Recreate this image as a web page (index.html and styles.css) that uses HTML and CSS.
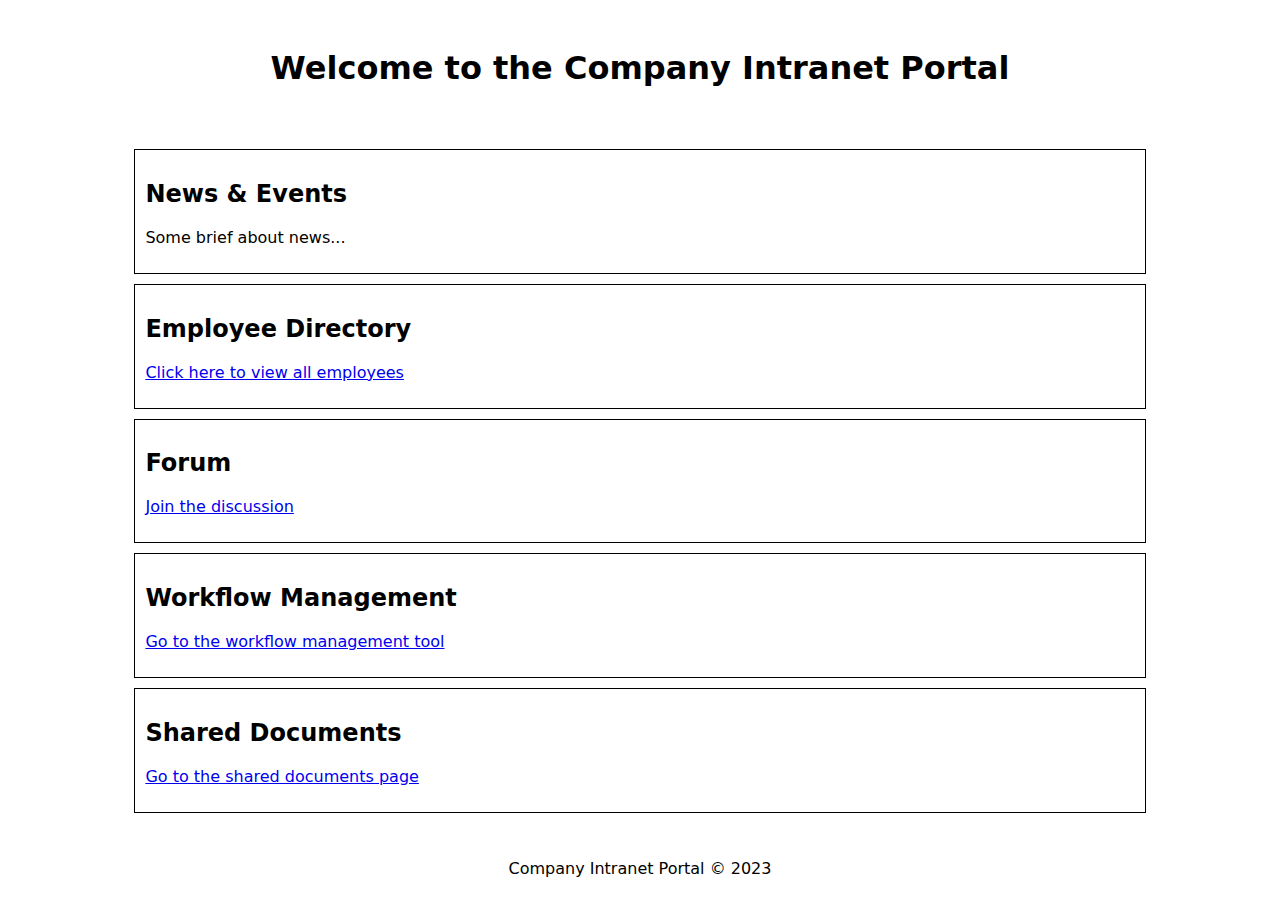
FILE: index.html
```html
<!DOCTYPE html>
<html lang="en">
<head>
<meta charset="utf-8">
<title>Company Intranet Portal</title>
<link rel="stylesheet" href="styles.css">
</head>
<body>
<header class="site-header">
  <h1>Welcome to the Company Intranet Portal</h1>
</header>
<main class="content">
  <section class="card">
    <h2>News &amp; Events</h2>
    <p>Some brief about news...</p>
  </section>
  <section class="card">
    <h2>Employee Directory</h2>
    <p><a href="#">Click here to view all employees</a></p>
  </section>
  <section class="card">
    <h2>Forum</h2>
    <p><a href="#">Join the discussion</a></p>
  </section>
  <section class="card">
    <h2>Workflow Management</h2>
    <p><a href="#">Go to the workflow management tool</a></p>
  </section>
  <section class="card">
    <h2>Shared Documents</h2>
    <p><a href="#">Go to the shared documents page</a></p>
  </section>
</main>
<footer class="site-footer">
  <p>Company Intranet Portal © 2023</p>
</footer>
</body>
</html>
```
FILE: styles.css
```css
body {
  margin: 8px;
  font-family: "DejaVu Sans", sans-serif;
  color: #000;
  background: #fff;
}
.site-header {
  padding: 20px;
  text-align: center;
}
.site-header h1 {
  font-size: 32px;
  margin: 21.44px 0;
}
.content {
  margin-top: 20px;
}
.card {
  box-sizing: border-box;
  width: 80%;
  margin: 10px auto;
  padding: 10px;
  border: 1px solid #000;
}
.card h2 {
  font-size: 24px;
  margin: 19.92px 0;
}
.card p {
  font-size: 16px;
  margin: 0 0 16px;
}
.card a {
  color: #0000ee;
}
.site-footer {
  padding: 20px;
  text-align: center;
}
.site-footer p {
  margin: 16px 0;
}
```
